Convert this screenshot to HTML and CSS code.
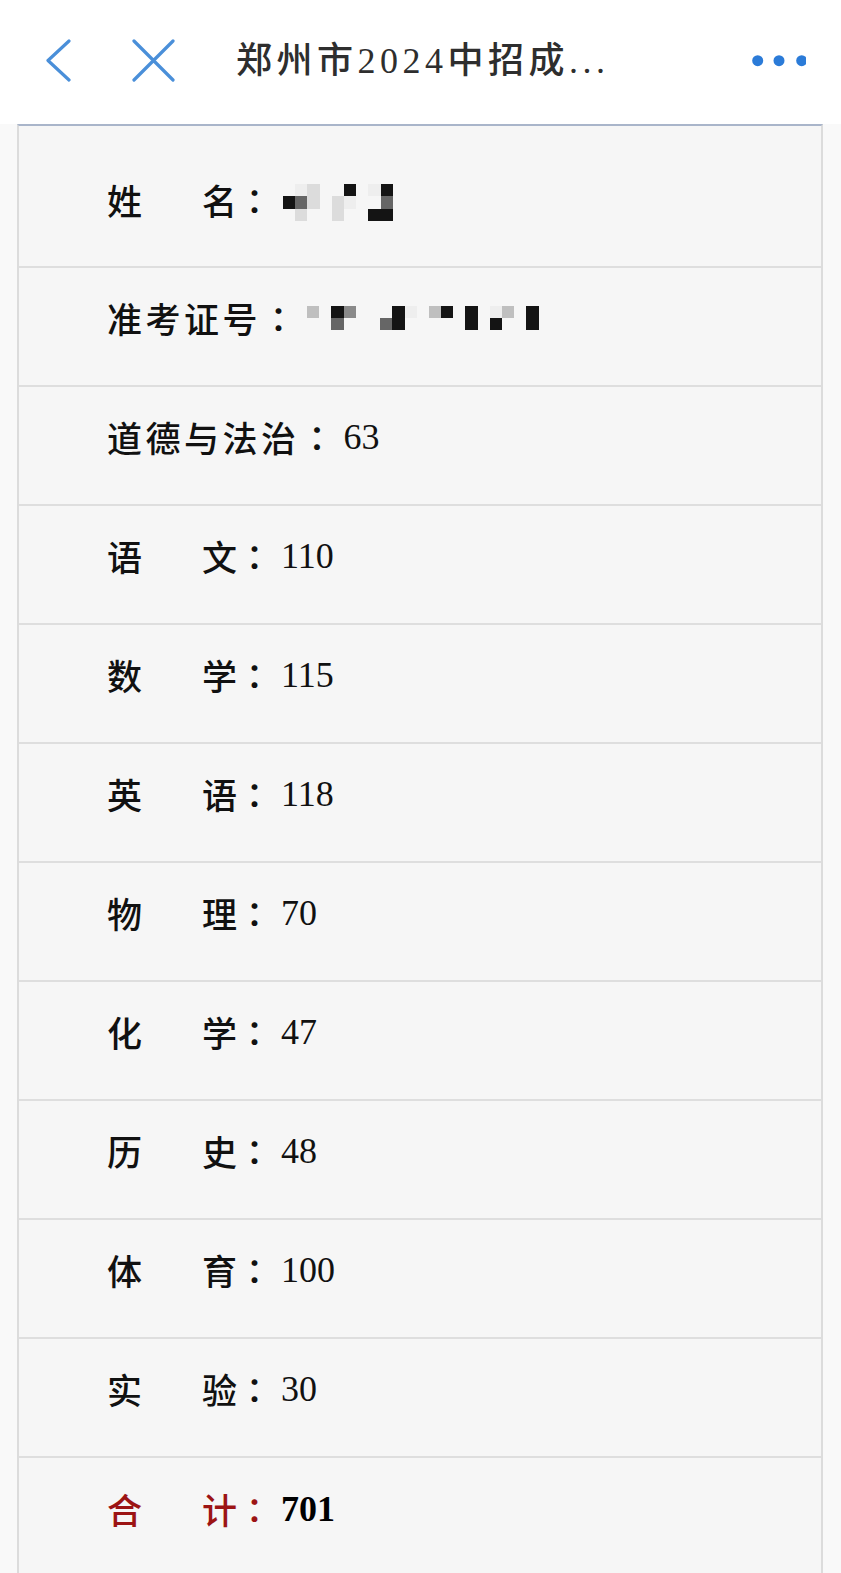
FILE: index.html
```html
<!DOCTYPE html>
<html lang="zh-CN">
<head>
<meta charset="utf-8">
<title>郑州市2024中招成绩</title>
<link rel="stylesheet" href="styles.css">
</head>
<body>
<header class="nav">
  <svg class="ic-back" viewBox="0 0 25 43"><path d="M23 2 L2 21.5 L23 41" /></svg>
  <svg class="ic-close" viewBox="0 0 43 43"><path d="M2 2 L41 41 M41 2 L2 41" /></svg>
  <h1 class="title">郑州市2024中招成...</h1>
  <svg class="ic-more" viewBox="0 0 56 14"><circle cx="7.7" cy="6.7" r="5.5"/><circle cx="29" cy="6.7" r="5.5"/><circle cx="51.7" cy="6.7" r="5.5"/></svg>
</header>
<main class="sheet">
  <div class="row first"><span class="label two"><span>姓</span><span>名</span></span><span class="colon">：</span>
    <span class="mosaic name">
      <i></i><i class="f"></i><i class="l"></i><i></i><i></i><i class="k"></i><i></i><i class="f"></i><i class="k"></i>
      <i class="k"></i><i class="d"></i><i class="l"></i><i></i><i class="l"></i><i class="f"></i><i></i><i></i><i class="d"></i>
      <i></i><i class="l"></i><i></i><i></i><i class="l"></i><i></i><i></i><i class="k"></i><i class="k"></i>
    </span>
  </div>
  <div class="row"><span class="label">准考证号</span><span class="colon">：</span>
    <span class="mosaic id">
      <i class="m"></i><i></i><i class="k"></i><i class="g"></i><i></i><i></i><i></i><i class="k"></i><i class="f"></i><i></i><i class="m"></i><i class="k"></i><i></i><i class="k"></i><i></i><i class="f"></i><i class="m"></i><i></i><i class="k"></i>
      <i></i><i></i><i class="d"></i><i></i><i></i><i></i><i class="d"></i><i class="k"></i><i></i><i></i><i></i><i></i><i></i><i class="k"></i><i></i><i class="k"></i><i></i><i></i><i class="k"></i>
    </span>
  </div>
  <div class="row"><span class="label">道德与法治</span><span class="colon">：</span><span class="val">63</span></div>
  <div class="row"><span class="label two"><span>语</span><span>文</span></span><span class="colon">：</span><span class="val">110</span></div>
  <div class="row"><span class="label two"><span>数</span><span>学</span></span><span class="colon">：</span><span class="val">115</span></div>
  <div class="row"><span class="label two"><span>英</span><span>语</span></span><span class="colon">：</span><span class="val">118</span></div>
  <div class="row"><span class="label two"><span>物</span><span>理</span></span><span class="colon">：</span><span class="val">70</span></div>
  <div class="row"><span class="label two"><span>化</span><span>学</span></span><span class="colon">：</span><span class="val">47</span></div>
  <div class="row"><span class="label two"><span>历</span><span>史</span></span><span class="colon">：</span><span class="val">48</span></div>
  <div class="row"><span class="label two"><span>体</span><span>育</span></span><span class="colon">：</span><span class="val">100</span></div>
  <div class="row"><span class="label two"><span>实</span><span>验</span></span><span class="colon">：</span><span class="val">30</span></div>
  <div class="row total"><span class="label two"><span>合</span><span>计</span></span><span class="colon">：</span><span class="val">701</span></div>
</main>
</body>
</html>
```
FILE: styles.css
```css
html, body {
  margin: 0;
  padding: 0;
  background: #f9f9f9;
}

.nav {
  display: flex;
  align-items: center;
  height: 124px;
  box-sizing: border-box;
  padding: 0 35px 3px 46px;
  background: #ffffff;
}

.ic-back {
  width: 25px;
  height: 43px;
  flex: none;
}

.ic-close {
  width: 43px;
  height: 43px;
  margin-left: 61px;
  flex: none;
}

.ic-back path,
.ic-close path {
  fill: none;
  stroke: #4a8fd9;
  stroke-width: 3.2;
  stroke-linecap: round;
  stroke-linejoin: round;
}

.title {
  margin: 0 0 0 61px;
  font-family: "Liberation Serif", "Noto Sans CJK SC", serif;
  font-weight: 500;
  font-size: 36px;
  line-height: 1;
  letter-spacing: 4.5px;
  color: #2e2e2e;
  white-space: nowrap;
}

.ic-more {
  margin-left: auto;
  width: 56px;
  height: 14px;
  flex: none;
}

.ic-more circle {
  fill: #2b7bd8;
}

.sheet {
  margin: 0 18px 0 17px;
  background: #f6f6f6;
  border-top: 2px solid #a9b5ca;
  border-left: 2px solid #dcdcdc;
  border-right: 2px solid #dcdcdc;
}

.row {
  display: flex;
  align-items: center;
  height: 119px;
  box-sizing: border-box;
  padding: 0 0 17px 88px;
  border-bottom: 2px solid #dedede;
  font-family: "Liberation Serif", "Noto Sans CJK SC", serif;
  font-size: 35px;
  line-height: 40px;
  color: #111111;
}

.row.first {
  height: 142px;
  padding-top: 24px;
}

.row.total {
  border-bottom: 0;
}

.label {
  font-family: "Noto Sans CJK SC", sans-serif;
  font-weight: 500;
  letter-spacing: 3.5px;
  white-space: nowrap;
}

.label.two {
  display: inline-flex;
  width: 130px;
  justify-content: space-between;
  letter-spacing: 0;
}

.colon {
  display: inline-block;
  width: 35px;
  text-align: center;
  font-family: "Noto Sans CJK TC", sans-serif;
  font-weight: 500;
}

.val {
  margin-left: 9px;
  font-family: "Liberation Serif", serif;
  font-size: 36px;
}

.total .label,
.total .colon {
  color: #9c1414;
}

.total .val {
  font-weight: 700;
  color: #000000;
}

.mosaic {
  display: grid;
  grid-auto-rows: 12.3px;
}

.mosaic.name {
  grid-template-columns: repeat(9, 12.2px);
  margin: 6px 0 0 11px;
}

.mosaic.id {
  grid-template-columns: repeat(19, 12.2px);
  margin: 0 0 0 11px;
}

.mosaic i { display: block; }
.mosaic .k { background: #141414; }
.mosaic .d { background: #666666; }
.mosaic .g { background: #8a8a8a; }
.mosaic .m { background: #bfbfbf; }
.mosaic .l { background: #dcdcdc; }
.mosaic .f { background: #eeeeee; }
```
